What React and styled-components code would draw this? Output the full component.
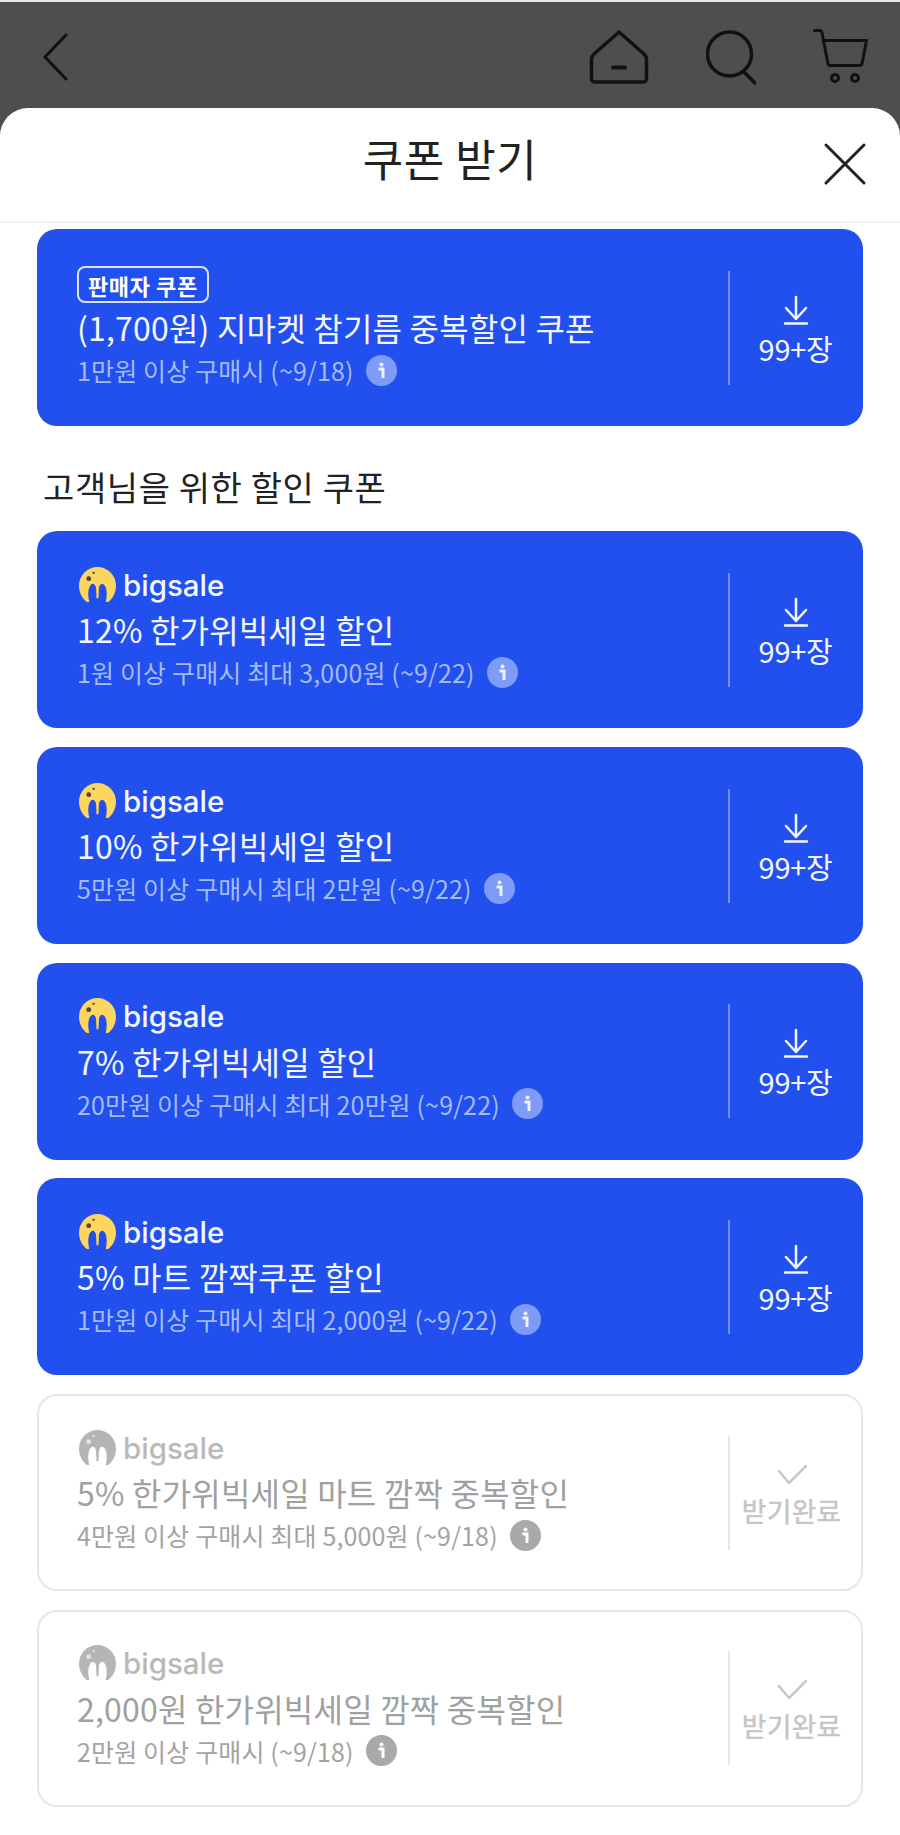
import React from 'react';
import styled, { createGlobalStyle } from 'styled-components';

const Global = createGlobalStyle`
  html, body { margin: 0; padding: 0; background: #fff; }
  body { font-family: "Noto Sans CJK KR", "Noto Sans", sans-serif; }
  * { box-sizing: border-box; }
`;
const Page = styled.div`width: 900px; height: 1835px; overflow: hidden; background: #4e4e4e; border-top: 2px solid #e8e8e8;`;
const TopBar = styled.div`
  height: 106px; display: flex; align-items: center; justify-content: space-between; padding: 3px 31px 0 42px;
`;
const TopIcons = styled.div`display: flex; align-items: center; gap: 57px;`;
const Sheet = styled.div`background: #fff; border-radius: 28px 28px 0 0; height: 1727px;`;
const SheetHeader = styled.div`
  height: 115px; border-bottom: 2px solid #f1f1f1; display: flex; align-items: center; justify-content: center; position: relative;
`;
const SheetTitle = styled.h1`margin: 0 0 13px; font-size: 44px; line-height: 50px; font-weight: 400; color: #222; letter-spacing: .5px;`;
const CloseBtn = styled.button`
  position: absolute; right: 33px; top: 34px; width: 44px; height: 44px; padding: 0; border: 0; background: none;
`;
const List = styled.div`padding: 6px 37px 0; display: flex; flex-direction: column; gap: 18.7px;`;
const SectionTitle = styled.h2`
  margin: 16px 0 0 6px; height: 52px; font-size: 34px; line-height: 40px; font-weight: 400; color: #222; display: flex; align-items: center; letter-spacing: .6px;
`;
const Card = styled.div`
  height: 197px; border-radius: 20px; display: flex; align-items: center;
  background: ${p => (p.$done ? '#fff' : '#2250ee')};
  border: ${p => (p.$done ? '2px solid #e6e6e6' : '0')};
  padding: ${p => (p.$done ? '0 0 0 38px' : '0 0 0 40px')};
`;
const Body = styled.div`flex: 1; min-width: 0; padding-bottom: 4px;`;
const BadgeRow = styled.div`height: 43px; display: flex; align-items: center;`;
const Badge = styled.span`
  border: 2px solid #d9e3ff; border-radius: 8px; height: 37px; padding: 0 9px; display: flex; align-items: center;
  font-size: 22px; font-weight: 700; color: #fff; letter-spacing: .6px;
`;
const Brand = styled.div`display: flex; align-items: center; gap: 7px; height: 43px; padding: 0 0 4px 2px;`;
const BrandName = styled.span`
  font-family: "Inter", "Noto Sans", sans-serif; font-size: 29.5px; font-weight: 500; line-height: 36px;
  color: ${p => (p.$done ? '#b9b9b9' : '#f4f6ff')};
`;
const Title = styled.div`
  font-size: 32px; line-height: 43px; font-weight: 400; white-space: nowrap; letter-spacing: .2px;
  color: ${p => (p.$done ? '#a0a0a0' : '#f4f6ff')};
`;
const Sub = styled.div`
  margin-top: 3px; display: flex; align-items: center; gap: 12px; font-size: 25px; line-height: 36px; white-space: nowrap; letter-spacing: .15px;
  color: ${p => (p.$done ? '#a3a3a3' : '#a4bafa')};
`;
const Info = styled.svg`width: 31px; height: 31px; flex: none;`;
const Action = styled.div`
  width: ${p => (p.$done ? '133px' : '135px')}; height: 114px; flex: none; display: flex; flex-direction: column; align-items: center;
  padding: ${p => (p.$done ? '27px 8px 0 0' : '24px 2px 0 0')};
  border-left: 2px solid ${p => (p.$done ? '#e6e6e6' : '#6f8ff5')};
`;
const ActionLabel = styled.span`
  margin-top: ${p => (p.$done ? '7px' : '6px')}; font-size: ${p => (p.$done ? '27px' : '29px')}; line-height: 34px; font-weight: ${p => (p.$done ? 500 : 400)};
  color: ${p => (p.$done ? '#c6c6c6' : '#f4f6ff')}; letter-spacing: ${p => (p.$done ? '0' : '-.3px')}; white-space: nowrap;
`;

const Logo = ({ done }) => {
  const c = done ? '#b5b5b5' : '#fdd660';
  const dark = done ? '#e4e4e4' : '#4a4a3a';
  const hole = done ? '#fff' : '#2250ee';
  return (
    <svg width="37" height="36" viewBox="0 0 38 37" aria-hidden="true">
      <path d="M8 36C3 32 0 26 0 19A19 19 0 0 1 38 19C38 26 35 32 30 36Z" fill={c} />
      <path d="M11 38C9 31 9 24 11 20 13 16 16 16 17.500 21L18 32H20L20.500 21C22 16 25 16 27 20 29 24 29 31 27 38Z" fill={hole} />
      <circle cx="10" cy="12" r="2.500" fill={dark} />
      <circle cx="15" cy="6" r="1.200" fill={dark} />
    </svg>
  );
};

const InfoIcon = ({ done }) => (
  <Info viewBox="0 0 31 31" aria-hidden="true">
    <circle cx="15.500" cy="15.500" r="15.500" fill={done ? '#a9a9a9' : '#7e9bf7'} />
    <circle cx="15.500" cy="9.500" r="2" fill={done ? '#fff' : '#eef2ff'} />
    <path d="M12.500 14h4.500v9" fill="none" stroke={done ? '#fff' : '#eef2ff'} strokeWidth="3" />
  </Info>
);

const coupons = [
  { badge: true, title: '(1,700원) 지마켓 참기름 중복할인 쿠폰', sub: '1만원 이상 구매시 (~9/18)' },
  { section: '고객님을 위한 할인 쿠폰' },
  { title: '12% 한가위빅세일 할인', sub: '1원 이상 구매시 최대 3,000원 (~9/22)' },
  { title: '10% 한가위빅세일 할인', sub: '5만원 이상 구매시 최대 2만원 (~9/22)' },
  { title: '7% 한가위빅세일 할인', sub: '20만원 이상 구매시 최대 20만원 (~9/22)' },
  { title: '5% 마트 깜짝쿠폰 할인', sub: '1만원 이상 구매시 최대 2,000원 (~9/22)' },
  { done: true, title: '5% 한가위빅세일 마트 깜짝 중복할인', sub: '4만원 이상 구매시 최대 5,000원 (~9/18)' },
  { done: true, title: '2,000원 한가위빅세일 깜짝 중복할인', sub: '2만원 이상 구매시 (~9/18)' },
];

export default function App() {
  return (
    <Page>
      <Global />
      <TopBar>
        <svg width="26" height="50" viewBox="0 0 26 50" fill="none" stroke="#111" strokeWidth="3" strokeLinecap="round" strokeLinejoin="round">
          <path d="M24 3 3 25l21 22" />
        </svg>
        <TopIcons>
          <svg width="60" height="56" viewBox="0 0 60 56" fill="none" stroke="#111" strokeWidth="3.500" strokeLinejoin="round" strokeLinecap="round">
            <path d="M30 3 5 25c-2 2-2.500 3-2.500 5v19c0 3 1 4 4 4h47c3 0 4-1 4-4V30c0-2-.5-3-2.500-5Z" />
            <path d="M24 38.500h12" strokeWidth="4" />
          </svg>
          <svg width="50" height="56" viewBox="0 0 50 56" fill="none" stroke="#111" strokeWidth="3.500" strokeLinecap="round">
            <circle cx="23.500" cy="25" r="22" />
            <path d="M38 43 49 54" />
          </svg>
          <svg width="56" height="56" viewBox="0 0 56 56" fill="none" stroke="#111" strokeWidth="3" strokeLinecap="round" strokeLinejoin="round">
            <path d="M1.500 1.500H7c1 0 1.500.5 2 2L15 35c.3 1 1 1.500 2 1.500h30c1 0 1.500-.5 2-1.500L53.500 11.500H10" />
            <circle cx="22" cy="49" r="3.500" />
            <circle cx="42" cy="49" r="3.500" />
          </svg>
        </TopIcons>
      </TopBar>
      <Sheet>
        <SheetHeader>
          <SheetTitle>쿠폰 받기</SheetTitle>
          <CloseBtn aria-label="닫기">
            <svg width="44" height="44" viewBox="0 0 44 44" fill="none" stroke="#222" strokeWidth="3" strokeLinecap="round">
              <path d="M3 3 41 41M41 3 3 41" />
            </svg>
          </CloseBtn>
        </SheetHeader>
        <List>
          {coupons.map((c, i) =>
            c.section ? (
              <SectionTitle key={i}>{c.section}</SectionTitle>
            ) : (
              <Card key={i} $done={c.done}>
                <Body>
                  {c.badge ? (
                    <BadgeRow><Badge>판매자 쿠폰</Badge></BadgeRow>
                  ) : (
                    <Brand>
                      <Logo done={c.done} />
                      <BrandName $done={c.done}>bigsale</BrandName>
                    </Brand>
                  )}
                  <Title $done={c.done}>{c.title}</Title>
                  <Sub $done={c.done}>
                    <span>{c.sub}</span>
                    <InfoIcon done={c.done} />
                  </Sub>
                </Body>
                <Action $done={c.done}>
                  {c.done ? (
                    <svg width="30" height="24" viewBox="0 0 30 24" fill="none" stroke="#c8c8c8" strokeWidth="2.500" strokeLinecap="round" strokeLinejoin="round">
                      <path d="M2 8l10 12L29 3" />
                    </svg>
                  ) : (
                    <svg width="26" height="30" viewBox="0 0 26 30" fill="none" stroke="#f4f6ff" strokeWidth="2.500" strokeLinecap="round" strokeLinejoin="round">
                      <path d="M13 2v21M3 13l10 11 10-11M2 28.500h22" />
                    </svg>
                  )}
                  <ActionLabel $done={c.done}>{c.done ? '받기완료' : '99+장'}</ActionLabel>
                </Action>
              </Card>
            )
          )}
        </List>
      </Sheet>
    </Page>
  );
}
